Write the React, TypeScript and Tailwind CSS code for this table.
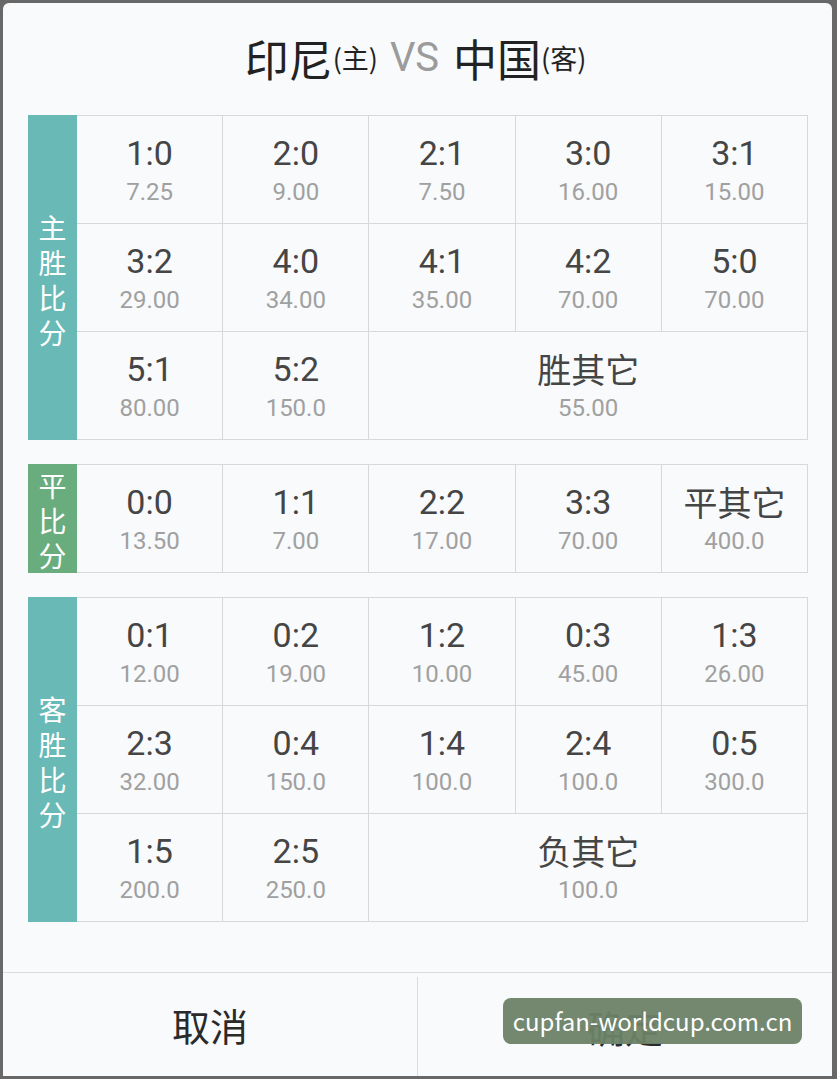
const CJK = "font-['Noto_Sans_CJK_SC','Noto_Sans',sans-serif]";
const NUM = "font-['Roboto','Noto_Sans_CJK_SC',sans-serif]";

type Cell = { score: string; odds: string; span?: boolean };

const homeWin: Cell[] = [
  { score: "1:0", odds: "7.25" },
  { score: "2:0", odds: "9.00" },
  { score: "2:1", odds: "7.50" },
  { score: "3:0", odds: "16.00" },
  { score: "3:1", odds: "15.00" },
  { score: "3:2", odds: "29.00" },
  { score: "4:0", odds: "34.00" },
  { score: "4:1", odds: "35.00" },
  { score: "4:2", odds: "70.00" },
  { score: "5:0", odds: "70.00" },
  { score: "5:1", odds: "80.00" },
  { score: "5:2", odds: "150.0" },
  { score: "胜其它", odds: "55.00", span: true },
];

const draw: Cell[] = [
  { score: "0:0", odds: "13.50" },
  { score: "1:1", odds: "7.00" },
  { score: "2:2", odds: "17.00" },
  { score: "3:3", odds: "70.00" },
  { score: "平其它", odds: "400.0" },
];

const awayWin: Cell[] = [
  { score: "0:1", odds: "12.00" },
  { score: "0:2", odds: "19.00" },
  { score: "1:2", odds: "10.00" },
  { score: "0:3", odds: "45.00" },
  { score: "1:3", odds: "26.00" },
  { score: "2:3", odds: "32.00" },
  { score: "0:4", odds: "150.0" },
  { score: "1:4", odds: "100.0" },
  { score: "2:4", odds: "100.0" },
  { score: "0:5", odds: "300.0" },
  { score: "1:5", odds: "200.0" },
  { score: "2:5", odds: "250.0" },
  { score: "负其它", odds: "100.0", span: true },
];

function Section({ label, color, cells }: { label: string; color: string; cells: Cell[] }) {
  return (
    <div className="flex w-[780px]">
      <div
        className={`w-[49px] shrink-0 flex flex-col items-center justify-center text-white text-[28px] pt-[4px] ${CJK} ${color}`}
      >
        {label.split("").map((c, i) => (
          <span key={i} className="block h-[35px] leading-[35px]">
            {c}
          </span>
        ))}
      </div>
      <div className="grid flex-1 grid-cols-5 border-t border-[#d8d8d8]">
        {cells.map((c) => (
          <div
            key={c.score}
            className={`h-[108px] flex flex-col items-center justify-center pt-[5px] border-r border-b border-[#d8d8d8] ${c.span ? "col-span-3" : ""}`}
          >
            <div className={`text-[34px] leading-[40px] text-[#454545] ${c.score.includes(":") ? NUM : CJK}`}>
              {c.score}
            </div>
            <div className={`text-[24px] leading-[39px] text-[#a0a0a0] ${NUM}`}>{c.odds}</div>
          </div>
        ))}
      </div>
    </div>
  );
}

export default function App() {
  return (
    <div className="relative w-[837px] h-[1079px] bg-[#686868] pt-[3px] pl-[3px] overflow-hidden">
      <div className="w-[829px] h-[1073px] bg-[#f8fafc] rounded-t-[6px] flex flex-col">
        <div className={`h-[112px] flex items-center justify-center pb-[2px] pr-[4px] text-[#222] ${CJK}`}>
          <span className="text-[44px]">印尼</span>
          <span className="text-[27px] mr-[12px]">(主)</span>
          <span className={`text-[40px] text-[#9b9b9b] mr-[14px] ${NUM}`}>VS</span>
          <span className="text-[44px]">中国</span>
          <span className="text-[27px]">(客)</span>
        </div>
        <div className="flex flex-col gap-[24px] pl-[25px]">
          <Section label="主胜比分" color="bg-[#69b9b6]" cells={homeWin} />
          <Section label="平比分" color="bg-[#69ac7d]" cells={draw} />
          <Section label="客胜比分" color="bg-[#69b9b6]" cells={awayWin} />
        </div>
        <div className="mt-[50px] flex-1 flex border-t border-[#dcdcdc]">
          <div className={`w-[414px] flex items-center justify-center text-[38px] text-[#2a2a2a] ${CJK}`}>取消</div>
          <div className={`flex-1 mt-[4px] border-l border-[#dcdcdc] flex items-center justify-center text-[38px] text-[#2a2a2a] ${CJK}`}>
            确定
          </div>
        </div>
      </div>
      <div
        className={`absolute left-[503px] top-[998px] w-[299px] h-[46px] rounded-[8px] bg-[#6b8266]/95 flex items-center justify-center text-white text-[24px] ${CJK}`}
      >
        cupfan-worldcup.com.cn
      </div>
    </div>
  );
}
